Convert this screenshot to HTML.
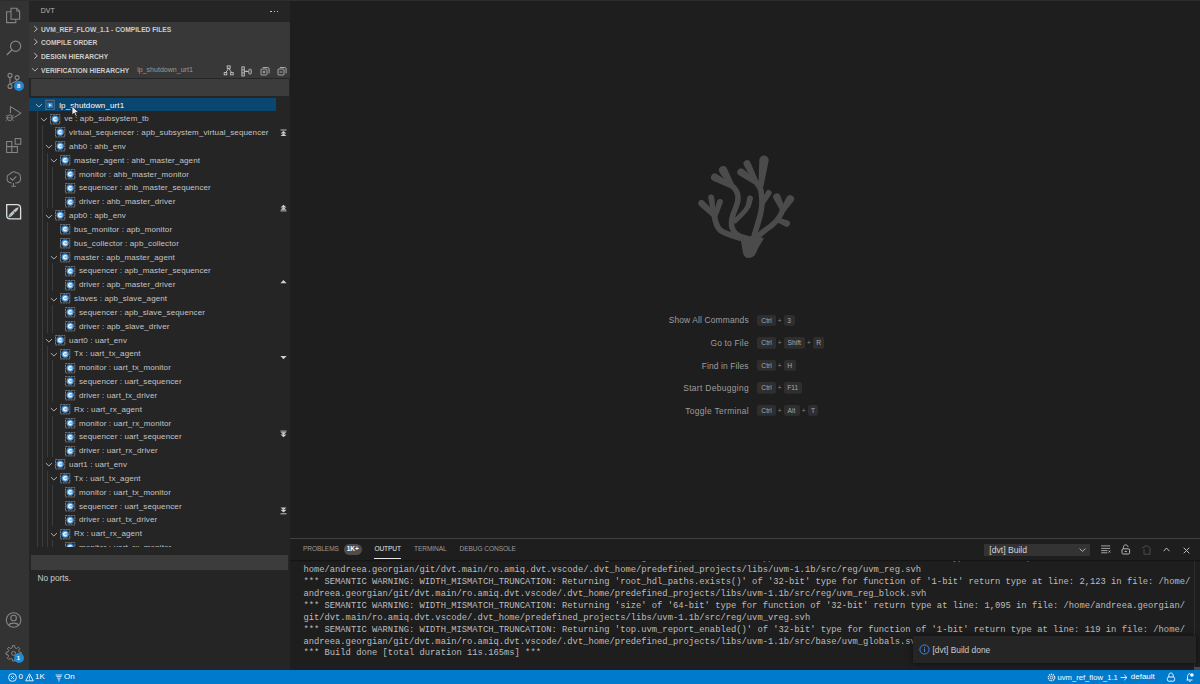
<!DOCTYPE html>
<html><head><meta charset="utf-8">
<style>
*{margin:0;padding:0;box-sizing:border-box}
html,body{width:1200px;height:684px;overflow:hidden;background:#1e1e1e;font-family:"Liberation Sans",sans-serif;}
.abs{position:absolute}
#topline{position:absolute;left:0;top:0;width:1200px;height:1px;background:#2d2d2d}
#act{position:absolute;left:0;top:1px;width:28.8px;height:669px;background:#333333}
#side{position:absolute;left:28.8px;top:1px;width:261.2px;height:669px;background:#252526;overflow:hidden}
#editor{position:absolute;left:290px;top:1px;width:910px;height:537px;background:#1e1e1e}
#panel{position:absolute;left:290px;top:538px;width:910px;height:132px;background:#1e1e1e;border-top:1px solid #414141}
#status{position:absolute;left:0;top:670px;width:1200px;height:14px;background:#007acc}
.stitle{position:absolute;left:12px;top:5.7px;font-size:6.9px;color:#bbbbbb;letter-spacing:0.1px}
.sdots{position:absolute;left:241.5px;top:10px;width:8.5px;height:1.4px}
.sdots i{position:absolute;top:0;width:1.6px;height:1.4px;background:#c5c5c5}
#sections{position:absolute;left:0;top:21px;width:261.2px;height:55.5px;background:#383838}
.sec{position:absolute;left:0;height:13.75px;width:100%}
.sec .t{position:absolute;left:12.1px;top:2.6px;font-size:7.3px;font-weight:bold;color:#cccccc;white-space:nowrap;transform:scaleX(0.915);transform-origin:0 0}
.sec .cv{position:absolute;left:4.1px;top:2.9px}
.sec .cv.down{left:2.2px;top:4.2px}
.sec .sub{position:absolute;left:108.4px;top:2.9px;font-size:7.05px;color:#9a9a9a;white-space:nowrap}
#filter{position:absolute;left:2.2px;top:78px;width:257.8px;height:16.5px;background:#3c3c3c}
#tree{position:absolute;left:0;top:96.5px;width:247.5px;height:449.6px;overflow:hidden}
.row{position:absolute;left:0;width:100%;height:13.8px}
.row.sel{background:#094771}
.row .cv{position:absolute;top:5.4px;width:8px;height:6px;margin-left:-0.2px}
.row .icw{position:absolute;top:0.8px;width:12px;height:12px;margin-left:-0.3px}
.row .lbl{position:absolute;top:3.0px;font-size:8.0px;letter-spacing:0.12px;line-height:normal;color:#c4c4c4;white-space:nowrap}
.row.sel .lbl{color:#ffffff}
svg{display:block}
.guide{position:absolute;width:1px;background:#3c3c3c}
#ports{position:absolute;left:2.2px;top:554px;width:257.5px;height:15px;background:#3c3c3c}
.noports{position:absolute;left:8.6px;top:572.3px;font-size:8.3px;color:#cccccc}
.sbtn{position:absolute;left:250.5px;width:7px;height:8px}
/* editor watermark */
.wl{position:absolute;right:451.4px;font-size:8.45px;color:#9d9d9d;white-space:nowrap;height:12px;line-height:12px}
.wk{position:absolute;left:467px;white-space:nowrap;height:12px;line-height:12px;font-size:0}
.kc{position:absolute;height:11.5px;line-height:11.5px;text-align:center;background:#2e2e2e;border-radius:2px;font-size:6.7px;color:#a8a8a8;box-shadow:inset 0 -0.6px 0 #262626}
.plus{position:absolute;height:11.5px;text-align:center;font-size:6.5px;color:#8a8a8a;line-height:11.5px}
/* panel */
.ptab{position:absolute;top:5.7px;font-size:6.6px;color:#9b9b9b;white-space:nowrap;letter-spacing:-0.1px}
.ptab.act{color:#e7e7e7}
.badge{position:absolute;left:54px;top:5.2px;width:17.6px;height:10.6px;border-radius:5.3px;background:#4d4d4d;color:#fff;font-size:6.5px;font-weight:bold;text-align:center;line-height:10.6px}
#out{position:absolute;left:13.4px;top:22px;width:890px;height:108px;overflow:hidden}
#out .inner{position:absolute;left:0;top:4.3px;width:890px;height:110px}
.shadow{position:absolute;left:0;top:21px;width:910px;height:2px;background:linear-gradient(#121212,rgba(18,18,18,0))}
.ol{position:absolute;left:0;font-family:"Liberation Mono",monospace;font-size:8.8px;color:#bdbdbd;white-space:pre;height:11.875px;line-height:11.875px}
.dd{position:absolute;left:694px;top:4.9px;width:106px;height:12.2px;background:#333333;color:#d4d4d4;font-size:8.6px;line-height:12.2px;padding-left:5.3px}
.notif{position:absolute;left:913px;top:636.3px;width:282.5px;height:26.7px;background:#252526;box-shadow:0 0 6px rgba(0,0,0,0.6)}
.ntext{position:absolute;left:19.5px;top:8.8px;font-size:8.4px;color:#cccccc;white-space:nowrap}
.stxt{position:absolute;top:2.3px;font-size:8px;color:#ffffff;white-space:nowrap}
</style></head>
<body>
<div id="topline"></div>

<!-- ACTIVITY BAR -->
<div id="act">
 <!-- files -->
 <svg class="abs" style="left:5.3px;top:4.9px" width="16" height="18" viewBox="0 0 16 18">
  <path d="M6 2.2 H11.6 L14.6 5.2 V13.2 H6 Z" fill="none" stroke="#858585" stroke-width="1.1"/>
  <path d="M11.6 2.2 V5.2 H14.6" fill="none" stroke="#858585" stroke-width="0.9"/>
  <path d="M6 5.8 H1.6 V16.6 H10.8 V13.2" fill="none" stroke="#858585" stroke-width="1.1"/>
 </svg>
 <!-- search -->
 <svg class="abs" style="left:5px;top:38.3px" width="18" height="18" viewBox="0 0 18 18">
  <circle cx="10.6" cy="7.2" r="5.1" fill="none" stroke="#858585" stroke-width="1.2"/>
  <path d="M7 10.8 L1.8 16" stroke="#858585" stroke-width="1.3"/>
 </svg>
 <!-- source control -->
 <svg class="abs" style="left:5px;top:69px" width="20" height="22" viewBox="0 0 20 22">
  <circle cx="5" cy="5.4" r="2" fill="none" stroke="#858585" stroke-width="1.1"/>
  <circle cx="5" cy="16.4" r="2" fill="none" stroke="#858585" stroke-width="1.1"/>
  <circle cx="12.1" cy="7.6" r="2" fill="none" stroke="#858585" stroke-width="1.1"/>
  <path d="M5 7.4 V14.4 M12.1 9.6 C12.1 12.5 7 12 5.6 14.6" fill="none" stroke="#858585" stroke-width="1.1"/>
 </svg>
 <div class="abs" style="left:13.6px;top:79.8px;width:10px;height:10px;border-radius:5px;background:#1f8ad2;color:#fff;font-size:6px;font-weight:bold;text-align:center;line-height:10px">8</div>
 <!-- run debug -->
 <svg class="abs" style="left:4px;top:104px" width="20" height="18" viewBox="0 0 20 18">
  <path d="M6.4 8.2 V1.6 L16.9 8.1 L10.4 12.4" fill="none" stroke="#858585" stroke-width="1.05" stroke-linejoin="round"/>
  <ellipse cx="5.8" cy="12.8" rx="2.5" ry="2.9" fill="none" stroke="#858585" stroke-width="1"/>
  <path d="M2 10.2 L3.5 11 M1.8 15.6 L3.4 14.6 M9.6 10.2 L8.1 11 M9.8 15.6 L8.2 14.6 M3.4 12.8 H8.2 M1.6 12.8 H3.2 M8.4 12.8 H10" stroke="#858585" stroke-width="0.85"/>
 </svg>
 <!-- extensions -->
 <svg class="abs" style="left:4.8px;top:136.2px" width="18" height="18" viewBox="0 0 18 18">
  <path d="M1.6 4.4 H6.8 V9.6 H12.4 V15.4 H1.6 Z M1.6 9.6 H6.8 V15.4" fill="none" stroke="#858585" stroke-width="1.05"/>
  <rect x="10.2" y="1.6" width="5.6" height="5.6" fill="none" stroke="#858585" stroke-width="1.05"/>
 </svg>
 <!-- tree check -->
 <svg class="abs" style="left:5px;top:169px" width="18" height="18" viewBox="0 0 18 18">
  <path d="M6.6 13 C3.6 13 1.8 11 2.2 8.6 C1.6 6 3.4 4.2 5.2 4 C6 2 9.6 1 11.2 2.8 C13.6 2.6 15.8 4.8 15.4 7.4 C16.4 9.8 14.6 13 11.4 13 H10.2" fill="none" stroke="#858585" stroke-width="1.05"/>
  <path d="M5.2 8 L7.6 10.2 L11.3 6.4" fill="none" stroke="#858585" stroke-width="1.05"/>
  <path d="M8.4 13 V16.2 M6.4 16.2 H10.9" fill="none" stroke="#858585" stroke-width="1.05"/>
 </svg>
 <!-- DVT (active) -->
 <svg class="abs" style="left:5px;top:202px" width="18" height="18" viewBox="0 0 18 18">
  <path d="M1.7 1.6 H11.8 C14 1.6 15.6 3.2 15.6 5.4 V15.8 H5.2 C3 15.8 1.7 14.4 1.7 12.4 Z" fill="none" stroke="#dedede" stroke-width="1.3"/>
  <path d="M4.2 11.6 L10.4 5.6 C11.4 4.7 12.6 4.3 13.6 4.2 C13.5 5.2 13.1 6.4 12.2 7.4 L6.2 13.6 Z" fill="#c4c4c4"/>
  <path d="M4.2 11.6 L3.4 13.8 L4.0 14.4 L6.2 13.6 Z" fill="#8fc0e0"/>
  <circle cx="9.6" cy="9.2" r="0.8" fill="#555"/>
 </svg>
 <!-- account -->
 <svg class="abs" style="left:5px;top:610px" width="18" height="18" viewBox="0 0 18 18">
  <circle cx="8.6" cy="9" r="7.3" fill="none" stroke="#858585" stroke-width="1.1"/>
  <circle cx="8.6" cy="7" r="2.8" fill="none" stroke="#858585" stroke-width="1.1"/>
  <path d="M3.8 14.2 C5 11.4 12.2 11.4 13.4 14.2" fill="none" stroke="#858585" stroke-width="1.1"/>
 </svg>
 <!-- gear -->
 <svg class="abs" style="left:5px;top:643px" width="18" height="18" viewBox="0 0 18 18">
  <path d="M7.6 1.6 H9.6 L10 3.8 L11.6 4.6 L13.4 3.2 L14.8 4.6 L13.6 6.4 L14.2 8 L16.2 8.4 V10.4 L14.2 10.8 L13.6 12.4 L14.8 14.2 L13.4 15.6 L11.6 14.4 L10 15 L9.6 17 H7.6 L7.2 15 L5.6 14.4 L3.8 15.6 L2.4 14.2 L3.6 12.4 L3 10.8 L1 10.4 V8.4 L3 8 L3.6 6.4 L2.4 4.6 L3.8 3.2 L5.6 4.6 L7.2 3.8 Z" fill="none" stroke="#858585" stroke-width="1"/>
  <circle cx="8.6" cy="9.4" r="2" fill="none" stroke="#858585" stroke-width="1"/>
 </svg>
 <div class="abs" style="left:13.5px;top:651.7px;width:10px;height:10px;border-radius:5px;background:#1f8ad2;color:#fff;font-size:6px;font-weight:bold;text-align:center;line-height:10px">1</div>
</div>

<!-- SIDEBAR -->
<div id="side">
 <div class="stitle">DVT</div>
 <div class="sdots"><i style="left:0"></i><i style="left:3.3px"></i><i style="left:6.6px"></i></div>
 <div id="sections">
  <div class="sec" style="top:0.5px"><span class="cv"><svg class="chev" width="6" height="8" viewBox="0 0 6 8"><path d="M1.3 1.1 L4.3 3.9 L1.3 6.7" fill="none" stroke="#c5c5c5" stroke-width="0.95"/></svg></span><span class="t">UVM_REF_FLOW_1.1 - COMPILED FILES</span></div>
  <div class="sec" style="top:13.6px"><span class="cv"><svg class="chev" width="6" height="8" viewBox="0 0 6 8"><path d="M1.3 1.1 L4.3 3.9 L1.3 6.7" fill="none" stroke="#c5c5c5" stroke-width="0.95"/></svg></span><span class="t">COMPILE ORDER</span></div>
  <div class="sec" style="top:27.1px"><span class="cv"><svg class="chev" width="6" height="8" viewBox="0 0 6 8"><path d="M1.3 1.1 L4.3 3.9 L1.3 6.7" fill="none" stroke="#c5c5c5" stroke-width="0.95"/></svg></span><span class="t">DESIGN HIERARCHY</span></div>
  <div class="sec" style="top:41.2px"><span class="cv down"><svg class="chev" width="8" height="6" viewBox="0 0 8 6"><path d="M0.9 1.1 L3.9 4.0 L6.9 1.1" fill="none" stroke="#c5c5c5" stroke-width="0.85"/></svg></span><span class="t">VERIFICATION HIERARCHY</span><span class="sub">lp_shutdown_urt1</span>
   <svg class="abs" style="left:194px;top:2.1px" width="12" height="11" viewBox="0 0 12 11">
    <rect x="4.2" y="0.9" width="3" height="2.4" fill="none" stroke="#c5c5c5" stroke-width="0.9"/>
    <path d="M5.7 3.3 L2.6 7.8 M5.7 3.3 L8.8 7.8" stroke="#c5c5c5" stroke-width="0.9"/>
    <rect x="1.2" y="7.6" width="2.6" height="2.2" fill="none" stroke="#c5c5c5" stroke-width="0.9"/>
    <rect x="7.6" y="7.6" width="2.6" height="2.2" fill="none" stroke="#c5c5c5" stroke-width="0.9"/>
   </svg>
   <svg class="abs" style="left:212px;top:2.5px" width="12" height="11" viewBox="0 0 12 11">
    <rect x="0.9" y="0.9" width="2.4" height="9" fill="none" stroke="#c5c5c5" stroke-width="0.9"/>
    <path d="M0.9 3.9 H3.3 M0.9 6.9 H3.3 M3.3 5.4 H7.2" stroke="#c5c5c5" stroke-width="0.9"/>
    <circle cx="5.6" cy="5.4" r="0.8" fill="#c5c5c5"/>
    <rect x="7.8" y="3.3" width="2.4" height="4.6" rx="0.6" fill="none" stroke="#c5c5c5" stroke-width="0.9"/>
   </svg>
   <svg class="abs" style="left:230.8px;top:2.6px" width="11" height="11" viewBox="0 0 11 11">
    <rect x="1" y="3" width="6" height="6" rx="0.7" fill="none" stroke="#c5c5c5" stroke-width="0.8"/>
    <path d="M2.8 1.5 H7.8 C8.6 1.5 9.1 2 9.1 2.8 V7.4" fill="none" stroke="#c5c5c5" stroke-width="0.8"/>
    <path d="M4 4.6 V7.4 M2.6 6 H5.4" stroke="#c5c5c5" stroke-width="0.8"/>
   </svg>
   <svg class="abs" style="left:248.6px;top:2.6px" width="11" height="11" viewBox="0 0 11 11">
    <rect x="1" y="3" width="6" height="6" rx="0.7" fill="none" stroke="#c5c5c5" stroke-width="0.8"/>
    <path d="M2.8 1.5 H7.8 C8.6 1.5 9.1 2 9.1 2.8 V7.4" fill="none" stroke="#c5c5c5" stroke-width="0.8"/>
    <path d="M2.6 6 H5.4" stroke="#c5c5c5" stroke-width="0.8"/>
   </svg>
  </div>
 </div>
 <div id="filter"></div>
 <div id="tree">
<div class="guide" style="left:8.60px;top:13.83px;height:442.56px"></div>
<div class="guide" style="left:13.55px;top:27.66px;height:428.73px"></div>
<div class="guide" style="left:18.50px;top:55.32px;height:55.32px"></div>
<div class="guide" style="left:23.45px;top:69.15px;height:41.49px"></div>
<div class="guide" style="left:18.50px;top:124.47px;height:110.64px"></div>
<div class="guide" style="left:23.45px;top:165.96px;height:27.66px"></div>
<div class="guide" style="left:23.45px;top:207.45px;height:27.66px"></div>
<div class="guide" style="left:18.50px;top:248.94px;height:110.64px"></div>
<div class="guide" style="left:23.45px;top:262.77px;height:41.49px"></div>
<div class="guide" style="left:23.45px;top:318.09px;height:41.49px"></div>
<div class="guide" style="left:18.50px;top:373.41px;height:82.98px"></div>
<div class="guide" style="left:23.45px;top:387.24px;height:41.49px"></div>
<div class="guide" style="left:23.45px;top:442.56px;height:13.83px"></div>
<div class="row sel" style="top:0.00px"><span class="cv" style="left:6.40px"><svg class="chev" width="8" height="6" viewBox="0 0 8 6"><path d="M0.9 1.1 L3.9 4.0 L6.9 1.1" fill="none" stroke="#c5c5c5" stroke-width="0.85"/></svg></span><span class="icw" style="left:15.70px;top:0.8px"><svg class="ic" width="12" height="12" viewBox="0 0 12 12"><rect x="1.9" y="2.3" width="8.3" height="9.6" fill="none" stroke="#6d7480" stroke-width="0.9"/><rect x="3.4" y="4.6" width="5.4" height="5.2" fill="#3f86c6"/><path d="M5 5.6 L7.6 7.2 L5 8.8 Z" fill="#e8f2fa"/></svg></span><span class="lbl" style="left:30.40px">lp_shutdown_urt1</span></div>
<div class="row" style="top:13.83px"><span class="cv" style="left:11.35px"><svg class="chev" width="8" height="6" viewBox="0 0 8 6"><path d="M0.9 1.1 L3.9 4.0 L6.9 1.1" fill="none" stroke="#c5c5c5" stroke-width="0.85"/></svg></span><span class="icw" style="left:20.85px;top:1.3px"><svg class="ic" width="12" height="12" viewBox="0 0 12 12"><rect x="1.5" y="1.6" width="9.3" height="9.3" fill="none" stroke="#8e8e8e" stroke-width="0.8" stroke-dasharray="2.1 0.6 1.9 0.6"/><circle cx="6.15" cy="6.05" r="3.6" fill="#4d9ce0"/><path d="M2.9 4.4 A3.6 3.6 0 0 1 9.4 4.4" fill="none" stroke="#1d5aa0" stroke-width="0.9"/><circle cx="6.15" cy="6.2" r="2.3" fill="#86c0f2"/><path d="M7.5 5.0 A1.65 1.65 0 1 0 7.5 7.3" fill="none" stroke="#ffffff" stroke-width="1.15"/></svg></span><span class="lbl" style="left:35.35px">ve : apb_subsystem_tb</span></div>
<div class="row" style="top:27.66px"><span class="cv" style="left:16.30px"></span><span class="icw" style="left:25.80px;top:1.3px"><svg class="ic" width="12" height="12" viewBox="0 0 12 12"><rect x="1.5" y="1.6" width="9.3" height="9.3" fill="none" stroke="#8e8e8e" stroke-width="0.8" stroke-dasharray="2.1 0.6 1.9 0.6"/><circle cx="6.15" cy="6.05" r="3.6" fill="#4d9ce0"/><path d="M2.9 4.4 A3.6 3.6 0 0 1 9.4 4.4" fill="none" stroke="#1d5aa0" stroke-width="0.9"/><circle cx="6.15" cy="6.2" r="2.3" fill="#86c0f2"/><path d="M7.5 5.0 A1.65 1.65 0 1 0 7.5 7.3" fill="none" stroke="#ffffff" stroke-width="1.15"/></svg></span><span class="lbl" style="left:40.30px">virtual_sequencer : apb_subsystem_virtual_sequencer</span></div>
<div class="row" style="top:41.49px"><span class="cv" style="left:16.30px"><svg class="chev" width="8" height="6" viewBox="0 0 8 6"><path d="M0.9 1.1 L3.9 4.0 L6.9 1.1" fill="none" stroke="#c5c5c5" stroke-width="0.85"/></svg></span><span class="icw" style="left:25.80px;top:1.3px"><svg class="ic" width="12" height="12" viewBox="0 0 12 12"><rect x="1.5" y="1.6" width="9.3" height="9.3" fill="none" stroke="#8e8e8e" stroke-width="0.8" stroke-dasharray="2.1 0.6 1.9 0.6"/><circle cx="6.15" cy="6.05" r="3.6" fill="#4d9ce0"/><path d="M2.9 4.4 A3.6 3.6 0 0 1 9.4 4.4" fill="none" stroke="#1d5aa0" stroke-width="0.9"/><circle cx="6.15" cy="6.2" r="2.3" fill="#86c0f2"/><path d="M7.5 5.0 A1.65 1.65 0 1 0 7.5 7.3" fill="none" stroke="#ffffff" stroke-width="1.15"/></svg></span><span class="lbl" style="left:40.30px">ahb0 : ahb_env</span></div>
<div class="row" style="top:55.32px"><span class="cv" style="left:21.25px"><svg class="chev" width="8" height="6" viewBox="0 0 8 6"><path d="M0.9 1.1 L3.9 4.0 L6.9 1.1" fill="none" stroke="#c5c5c5" stroke-width="0.85"/></svg></span><span class="icw" style="left:30.75px;top:1.3px"><svg class="ic" width="12" height="12" viewBox="0 0 12 12"><rect x="1.5" y="1.6" width="9.3" height="9.3" fill="none" stroke="#8e8e8e" stroke-width="0.8" stroke-dasharray="2.1 0.6 1.9 0.6"/><circle cx="6.15" cy="6.05" r="3.6" fill="#4d9ce0"/><path d="M2.9 4.4 A3.6 3.6 0 0 1 9.4 4.4" fill="none" stroke="#1d5aa0" stroke-width="0.9"/><circle cx="6.15" cy="6.2" r="2.3" fill="#86c0f2"/><path d="M7.5 5.0 A1.65 1.65 0 1 0 7.5 7.3" fill="none" stroke="#ffffff" stroke-width="1.15"/></svg></span><span class="lbl" style="left:45.25px">master_agent : ahb_master_agent</span></div>
<div class="row" style="top:69.15px"><span class="cv" style="left:26.20px"></span><span class="icw" style="left:35.70px;top:1.3px"><svg class="ic" width="12" height="12" viewBox="0 0 12 12"><rect x="1.5" y="1.6" width="9.3" height="9.3" fill="none" stroke="#8e8e8e" stroke-width="0.8" stroke-dasharray="2.1 0.6 1.9 0.6"/><circle cx="6.15" cy="6.05" r="3.6" fill="#4d9ce0"/><path d="M2.9 4.4 A3.6 3.6 0 0 1 9.4 4.4" fill="none" stroke="#1d5aa0" stroke-width="0.9"/><circle cx="6.15" cy="6.2" r="2.3" fill="#86c0f2"/><path d="M7.5 5.0 A1.65 1.65 0 1 0 7.5 7.3" fill="none" stroke="#ffffff" stroke-width="1.15"/></svg></span><span class="lbl" style="left:50.20px">monitor : ahb_master_monitor</span></div>
<div class="row" style="top:82.98px"><span class="cv" style="left:26.20px"></span><span class="icw" style="left:35.70px;top:1.3px"><svg class="ic" width="12" height="12" viewBox="0 0 12 12"><rect x="1.5" y="1.6" width="9.3" height="9.3" fill="none" stroke="#8e8e8e" stroke-width="0.8" stroke-dasharray="2.1 0.6 1.9 0.6"/><circle cx="6.15" cy="6.05" r="3.6" fill="#4d9ce0"/><path d="M2.9 4.4 A3.6 3.6 0 0 1 9.4 4.4" fill="none" stroke="#1d5aa0" stroke-width="0.9"/><circle cx="6.15" cy="6.2" r="2.3" fill="#86c0f2"/><path d="M7.5 5.0 A1.65 1.65 0 1 0 7.5 7.3" fill="none" stroke="#ffffff" stroke-width="1.15"/></svg></span><span class="lbl" style="left:50.20px">sequencer : ahb_master_sequencer</span></div>
<div class="row" style="top:96.81px"><span class="cv" style="left:26.20px"></span><span class="icw" style="left:35.70px;top:1.3px"><svg class="ic" width="12" height="12" viewBox="0 0 12 12"><rect x="1.5" y="1.6" width="9.3" height="9.3" fill="none" stroke="#8e8e8e" stroke-width="0.8" stroke-dasharray="2.1 0.6 1.9 0.6"/><circle cx="6.15" cy="6.05" r="3.6" fill="#4d9ce0"/><path d="M2.9 4.4 A3.6 3.6 0 0 1 9.4 4.4" fill="none" stroke="#1d5aa0" stroke-width="0.9"/><circle cx="6.15" cy="6.2" r="2.3" fill="#86c0f2"/><path d="M7.5 5.0 A1.65 1.65 0 1 0 7.5 7.3" fill="none" stroke="#ffffff" stroke-width="1.15"/></svg></span><span class="lbl" style="left:50.20px">driver : ahb_master_driver</span></div>
<div class="row" style="top:110.64px"><span class="cv" style="left:16.30px"><svg class="chev" width="8" height="6" viewBox="0 0 8 6"><path d="M0.9 1.1 L3.9 4.0 L6.9 1.1" fill="none" stroke="#c5c5c5" stroke-width="0.85"/></svg></span><span class="icw" style="left:25.80px;top:1.3px"><svg class="ic" width="12" height="12" viewBox="0 0 12 12"><rect x="1.5" y="1.6" width="9.3" height="9.3" fill="none" stroke="#8e8e8e" stroke-width="0.8" stroke-dasharray="2.1 0.6 1.9 0.6"/><circle cx="6.15" cy="6.05" r="3.6" fill="#4d9ce0"/><path d="M2.9 4.4 A3.6 3.6 0 0 1 9.4 4.4" fill="none" stroke="#1d5aa0" stroke-width="0.9"/><circle cx="6.15" cy="6.2" r="2.3" fill="#86c0f2"/><path d="M7.5 5.0 A1.65 1.65 0 1 0 7.5 7.3" fill="none" stroke="#ffffff" stroke-width="1.15"/></svg></span><span class="lbl" style="left:40.30px">apb0 : apb_env</span></div>
<div class="row" style="top:124.47px"><span class="cv" style="left:21.25px"></span><span class="icw" style="left:30.75px;top:1.3px"><svg class="ic" width="12" height="12" viewBox="0 0 12 12"><rect x="1.5" y="1.6" width="9.3" height="9.3" fill="none" stroke="#8e8e8e" stroke-width="0.8" stroke-dasharray="2.1 0.6 1.9 0.6"/><circle cx="6.15" cy="6.05" r="3.6" fill="#4d9ce0"/><path d="M2.9 4.4 A3.6 3.6 0 0 1 9.4 4.4" fill="none" stroke="#1d5aa0" stroke-width="0.9"/><circle cx="6.15" cy="6.2" r="2.3" fill="#86c0f2"/><path d="M7.5 5.0 A1.65 1.65 0 1 0 7.5 7.3" fill="none" stroke="#ffffff" stroke-width="1.15"/></svg></span><span class="lbl" style="left:45.25px">bus_monitor : apb_monitor</span></div>
<div class="row" style="top:138.30px"><span class="cv" style="left:21.25px"></span><span class="icw" style="left:30.75px;top:1.3px"><svg class="ic" width="12" height="12" viewBox="0 0 12 12"><rect x="1.5" y="1.6" width="9.3" height="9.3" fill="none" stroke="#8e8e8e" stroke-width="0.8" stroke-dasharray="2.1 0.6 1.9 0.6"/><circle cx="6.15" cy="6.05" r="3.6" fill="#4d9ce0"/><path d="M2.9 4.4 A3.6 3.6 0 0 1 9.4 4.4" fill="none" stroke="#1d5aa0" stroke-width="0.9"/><circle cx="6.15" cy="6.2" r="2.3" fill="#86c0f2"/><path d="M7.5 5.0 A1.65 1.65 0 1 0 7.5 7.3" fill="none" stroke="#ffffff" stroke-width="1.15"/></svg></span><span class="lbl" style="left:45.25px">bus_collector : apb_collector</span></div>
<div class="row" style="top:152.13px"><span class="cv" style="left:21.25px"><svg class="chev" width="8" height="6" viewBox="0 0 8 6"><path d="M0.9 1.1 L3.9 4.0 L6.9 1.1" fill="none" stroke="#c5c5c5" stroke-width="0.85"/></svg></span><span class="icw" style="left:30.75px;top:1.3px"><svg class="ic" width="12" height="12" viewBox="0 0 12 12"><rect x="1.5" y="1.6" width="9.3" height="9.3" fill="none" stroke="#8e8e8e" stroke-width="0.8" stroke-dasharray="2.1 0.6 1.9 0.6"/><circle cx="6.15" cy="6.05" r="3.6" fill="#4d9ce0"/><path d="M2.9 4.4 A3.6 3.6 0 0 1 9.4 4.4" fill="none" stroke="#1d5aa0" stroke-width="0.9"/><circle cx="6.15" cy="6.2" r="2.3" fill="#86c0f2"/><path d="M7.5 5.0 A1.65 1.65 0 1 0 7.5 7.3" fill="none" stroke="#ffffff" stroke-width="1.15"/></svg></span><span class="lbl" style="left:45.25px">master : apb_master_agent</span></div>
<div class="row" style="top:165.96px"><span class="cv" style="left:26.20px"></span><span class="icw" style="left:35.70px;top:1.3px"><svg class="ic" width="12" height="12" viewBox="0 0 12 12"><rect x="1.5" y="1.6" width="9.3" height="9.3" fill="none" stroke="#8e8e8e" stroke-width="0.8" stroke-dasharray="2.1 0.6 1.9 0.6"/><circle cx="6.15" cy="6.05" r="3.6" fill="#4d9ce0"/><path d="M2.9 4.4 A3.6 3.6 0 0 1 9.4 4.4" fill="none" stroke="#1d5aa0" stroke-width="0.9"/><circle cx="6.15" cy="6.2" r="2.3" fill="#86c0f2"/><path d="M7.5 5.0 A1.65 1.65 0 1 0 7.5 7.3" fill="none" stroke="#ffffff" stroke-width="1.15"/></svg></span><span class="lbl" style="left:50.20px">sequencer : apb_master_sequencer</span></div>
<div class="row" style="top:179.79px"><span class="cv" style="left:26.20px"></span><span class="icw" style="left:35.70px;top:1.3px"><svg class="ic" width="12" height="12" viewBox="0 0 12 12"><rect x="1.5" y="1.6" width="9.3" height="9.3" fill="none" stroke="#8e8e8e" stroke-width="0.8" stroke-dasharray="2.1 0.6 1.9 0.6"/><circle cx="6.15" cy="6.05" r="3.6" fill="#4d9ce0"/><path d="M2.9 4.4 A3.6 3.6 0 0 1 9.4 4.4" fill="none" stroke="#1d5aa0" stroke-width="0.9"/><circle cx="6.15" cy="6.2" r="2.3" fill="#86c0f2"/><path d="M7.5 5.0 A1.65 1.65 0 1 0 7.5 7.3" fill="none" stroke="#ffffff" stroke-width="1.15"/></svg></span><span class="lbl" style="left:50.20px">driver : apb_master_driver</span></div>
<div class="row" style="top:193.62px"><span class="cv" style="left:21.25px"><svg class="chev" width="8" height="6" viewBox="0 0 8 6"><path d="M0.9 1.1 L3.9 4.0 L6.9 1.1" fill="none" stroke="#c5c5c5" stroke-width="0.85"/></svg></span><span class="icw" style="left:30.75px;top:1.3px"><svg class="ic" width="12" height="12" viewBox="0 0 12 12"><rect x="1.5" y="1.6" width="9.3" height="9.3" fill="none" stroke="#8e8e8e" stroke-width="0.8" stroke-dasharray="2.1 0.6 1.9 0.6"/><circle cx="6.15" cy="6.05" r="3.6" fill="#4d9ce0"/><path d="M2.9 4.4 A3.6 3.6 0 0 1 9.4 4.4" fill="none" stroke="#1d5aa0" stroke-width="0.9"/><circle cx="6.15" cy="6.2" r="2.3" fill="#86c0f2"/><path d="M7.5 5.0 A1.65 1.65 0 1 0 7.5 7.3" fill="none" stroke="#ffffff" stroke-width="1.15"/></svg></span><span class="lbl" style="left:45.25px">slaves : apb_slave_agent</span></div>
<div class="row" style="top:207.45px"><span class="cv" style="left:26.20px"></span><span class="icw" style="left:35.70px;top:1.3px"><svg class="ic" width="12" height="12" viewBox="0 0 12 12"><rect x="1.5" y="1.6" width="9.3" height="9.3" fill="none" stroke="#8e8e8e" stroke-width="0.8" stroke-dasharray="2.1 0.6 1.9 0.6"/><circle cx="6.15" cy="6.05" r="3.6" fill="#4d9ce0"/><path d="M2.9 4.4 A3.6 3.6 0 0 1 9.4 4.4" fill="none" stroke="#1d5aa0" stroke-width="0.9"/><circle cx="6.15" cy="6.2" r="2.3" fill="#86c0f2"/><path d="M7.5 5.0 A1.65 1.65 0 1 0 7.5 7.3" fill="none" stroke="#ffffff" stroke-width="1.15"/></svg></span><span class="lbl" style="left:50.20px">sequencer : apb_slave_sequencer</span></div>
<div class="row" style="top:221.28px"><span class="cv" style="left:26.20px"></span><span class="icw" style="left:35.70px;top:1.3px"><svg class="ic" width="12" height="12" viewBox="0 0 12 12"><rect x="1.5" y="1.6" width="9.3" height="9.3" fill="none" stroke="#8e8e8e" stroke-width="0.8" stroke-dasharray="2.1 0.6 1.9 0.6"/><circle cx="6.15" cy="6.05" r="3.6" fill="#4d9ce0"/><path d="M2.9 4.4 A3.6 3.6 0 0 1 9.4 4.4" fill="none" stroke="#1d5aa0" stroke-width="0.9"/><circle cx="6.15" cy="6.2" r="2.3" fill="#86c0f2"/><path d="M7.5 5.0 A1.65 1.65 0 1 0 7.5 7.3" fill="none" stroke="#ffffff" stroke-width="1.15"/></svg></span><span class="lbl" style="left:50.20px">driver : apb_slave_driver</span></div>
<div class="row" style="top:235.11px"><span class="cv" style="left:16.30px"><svg class="chev" width="8" height="6" viewBox="0 0 8 6"><path d="M0.9 1.1 L3.9 4.0 L6.9 1.1" fill="none" stroke="#c5c5c5" stroke-width="0.85"/></svg></span><span class="icw" style="left:25.80px;top:1.3px"><svg class="ic" width="12" height="12" viewBox="0 0 12 12"><rect x="1.5" y="1.6" width="9.3" height="9.3" fill="none" stroke="#8e8e8e" stroke-width="0.8" stroke-dasharray="2.1 0.6 1.9 0.6"/><circle cx="6.15" cy="6.05" r="3.6" fill="#4d9ce0"/><path d="M2.9 4.4 A3.6 3.6 0 0 1 9.4 4.4" fill="none" stroke="#1d5aa0" stroke-width="0.9"/><circle cx="6.15" cy="6.2" r="2.3" fill="#86c0f2"/><path d="M7.5 5.0 A1.65 1.65 0 1 0 7.5 7.3" fill="none" stroke="#ffffff" stroke-width="1.15"/></svg></span><span class="lbl" style="left:40.30px">uart0 : uart_env</span></div>
<div class="row" style="top:248.94px"><span class="cv" style="left:21.25px"><svg class="chev" width="8" height="6" viewBox="0 0 8 6"><path d="M0.9 1.1 L3.9 4.0 L6.9 1.1" fill="none" stroke="#c5c5c5" stroke-width="0.85"/></svg></span><span class="icw" style="left:30.75px;top:1.3px"><svg class="ic" width="12" height="12" viewBox="0 0 12 12"><rect x="1.5" y="1.6" width="9.3" height="9.3" fill="none" stroke="#8e8e8e" stroke-width="0.8" stroke-dasharray="2.1 0.6 1.9 0.6"/><circle cx="6.15" cy="6.05" r="3.6" fill="#4d9ce0"/><path d="M2.9 4.4 A3.6 3.6 0 0 1 9.4 4.4" fill="none" stroke="#1d5aa0" stroke-width="0.9"/><circle cx="6.15" cy="6.2" r="2.3" fill="#86c0f2"/><path d="M7.5 5.0 A1.65 1.65 0 1 0 7.5 7.3" fill="none" stroke="#ffffff" stroke-width="1.15"/></svg></span><span class="lbl" style="left:45.25px">Tx : uart_tx_agent</span></div>
<div class="row" style="top:262.77px"><span class="cv" style="left:26.20px"></span><span class="icw" style="left:35.70px;top:1.3px"><svg class="ic" width="12" height="12" viewBox="0 0 12 12"><rect x="1.5" y="1.6" width="9.3" height="9.3" fill="none" stroke="#8e8e8e" stroke-width="0.8" stroke-dasharray="2.1 0.6 1.9 0.6"/><circle cx="6.15" cy="6.05" r="3.6" fill="#4d9ce0"/><path d="M2.9 4.4 A3.6 3.6 0 0 1 9.4 4.4" fill="none" stroke="#1d5aa0" stroke-width="0.9"/><circle cx="6.15" cy="6.2" r="2.3" fill="#86c0f2"/><path d="M7.5 5.0 A1.65 1.65 0 1 0 7.5 7.3" fill="none" stroke="#ffffff" stroke-width="1.15"/></svg></span><span class="lbl" style="left:50.20px">monitor : uart_tx_monitor</span></div>
<div class="row" style="top:276.60px"><span class="cv" style="left:26.20px"></span><span class="icw" style="left:35.70px;top:1.3px"><svg class="ic" width="12" height="12" viewBox="0 0 12 12"><rect x="1.5" y="1.6" width="9.3" height="9.3" fill="none" stroke="#8e8e8e" stroke-width="0.8" stroke-dasharray="2.1 0.6 1.9 0.6"/><circle cx="6.15" cy="6.05" r="3.6" fill="#4d9ce0"/><path d="M2.9 4.4 A3.6 3.6 0 0 1 9.4 4.4" fill="none" stroke="#1d5aa0" stroke-width="0.9"/><circle cx="6.15" cy="6.2" r="2.3" fill="#86c0f2"/><path d="M7.5 5.0 A1.65 1.65 0 1 0 7.5 7.3" fill="none" stroke="#ffffff" stroke-width="1.15"/></svg></span><span class="lbl" style="left:50.20px">sequencer : uart_sequencer</span></div>
<div class="row" style="top:290.43px"><span class="cv" style="left:26.20px"></span><span class="icw" style="left:35.70px;top:1.3px"><svg class="ic" width="12" height="12" viewBox="0 0 12 12"><rect x="1.5" y="1.6" width="9.3" height="9.3" fill="none" stroke="#8e8e8e" stroke-width="0.8" stroke-dasharray="2.1 0.6 1.9 0.6"/><circle cx="6.15" cy="6.05" r="3.6" fill="#4d9ce0"/><path d="M2.9 4.4 A3.6 3.6 0 0 1 9.4 4.4" fill="none" stroke="#1d5aa0" stroke-width="0.9"/><circle cx="6.15" cy="6.2" r="2.3" fill="#86c0f2"/><path d="M7.5 5.0 A1.65 1.65 0 1 0 7.5 7.3" fill="none" stroke="#ffffff" stroke-width="1.15"/></svg></span><span class="lbl" style="left:50.20px">driver : uart_tx_driver</span></div>
<div class="row" style="top:304.26px"><span class="cv" style="left:21.25px"><svg class="chev" width="8" height="6" viewBox="0 0 8 6"><path d="M0.9 1.1 L3.9 4.0 L6.9 1.1" fill="none" stroke="#c5c5c5" stroke-width="0.85"/></svg></span><span class="icw" style="left:30.75px;top:1.3px"><svg class="ic" width="12" height="12" viewBox="0 0 12 12"><rect x="1.5" y="1.6" width="9.3" height="9.3" fill="none" stroke="#8e8e8e" stroke-width="0.8" stroke-dasharray="2.1 0.6 1.9 0.6"/><circle cx="6.15" cy="6.05" r="3.6" fill="#4d9ce0"/><path d="M2.9 4.4 A3.6 3.6 0 0 1 9.4 4.4" fill="none" stroke="#1d5aa0" stroke-width="0.9"/><circle cx="6.15" cy="6.2" r="2.3" fill="#86c0f2"/><path d="M7.5 5.0 A1.65 1.65 0 1 0 7.5 7.3" fill="none" stroke="#ffffff" stroke-width="1.15"/></svg></span><span class="lbl" style="left:45.25px">Rx : uart_rx_agent</span></div>
<div class="row" style="top:318.09px"><span class="cv" style="left:26.20px"></span><span class="icw" style="left:35.70px;top:1.3px"><svg class="ic" width="12" height="12" viewBox="0 0 12 12"><rect x="1.5" y="1.6" width="9.3" height="9.3" fill="none" stroke="#8e8e8e" stroke-width="0.8" stroke-dasharray="2.1 0.6 1.9 0.6"/><circle cx="6.15" cy="6.05" r="3.6" fill="#4d9ce0"/><path d="M2.9 4.4 A3.6 3.6 0 0 1 9.4 4.4" fill="none" stroke="#1d5aa0" stroke-width="0.9"/><circle cx="6.15" cy="6.2" r="2.3" fill="#86c0f2"/><path d="M7.5 5.0 A1.65 1.65 0 1 0 7.5 7.3" fill="none" stroke="#ffffff" stroke-width="1.15"/></svg></span><span class="lbl" style="left:50.20px">monitor : uart_rx_monitor</span></div>
<div class="row" style="top:331.92px"><span class="cv" style="left:26.20px"></span><span class="icw" style="left:35.70px;top:1.3px"><svg class="ic" width="12" height="12" viewBox="0 0 12 12"><rect x="1.5" y="1.6" width="9.3" height="9.3" fill="none" stroke="#8e8e8e" stroke-width="0.8" stroke-dasharray="2.1 0.6 1.9 0.6"/><circle cx="6.15" cy="6.05" r="3.6" fill="#4d9ce0"/><path d="M2.9 4.4 A3.6 3.6 0 0 1 9.4 4.4" fill="none" stroke="#1d5aa0" stroke-width="0.9"/><circle cx="6.15" cy="6.2" r="2.3" fill="#86c0f2"/><path d="M7.5 5.0 A1.65 1.65 0 1 0 7.5 7.3" fill="none" stroke="#ffffff" stroke-width="1.15"/></svg></span><span class="lbl" style="left:50.20px">sequencer : uart_sequencer</span></div>
<div class="row" style="top:345.75px"><span class="cv" style="left:26.20px"></span><span class="icw" style="left:35.70px;top:1.3px"><svg class="ic" width="12" height="12" viewBox="0 0 12 12"><rect x="1.5" y="1.6" width="9.3" height="9.3" fill="none" stroke="#8e8e8e" stroke-width="0.8" stroke-dasharray="2.1 0.6 1.9 0.6"/><circle cx="6.15" cy="6.05" r="3.6" fill="#4d9ce0"/><path d="M2.9 4.4 A3.6 3.6 0 0 1 9.4 4.4" fill="none" stroke="#1d5aa0" stroke-width="0.9"/><circle cx="6.15" cy="6.2" r="2.3" fill="#86c0f2"/><path d="M7.5 5.0 A1.65 1.65 0 1 0 7.5 7.3" fill="none" stroke="#ffffff" stroke-width="1.15"/></svg></span><span class="lbl" style="left:50.20px">driver : uart_rx_driver</span></div>
<div class="row" style="top:359.58px"><span class="cv" style="left:16.30px"><svg class="chev" width="8" height="6" viewBox="0 0 8 6"><path d="M0.9 1.1 L3.9 4.0 L6.9 1.1" fill="none" stroke="#c5c5c5" stroke-width="0.85"/></svg></span><span class="icw" style="left:25.80px;top:1.3px"><svg class="ic" width="12" height="12" viewBox="0 0 12 12"><rect x="1.5" y="1.6" width="9.3" height="9.3" fill="none" stroke="#8e8e8e" stroke-width="0.8" stroke-dasharray="2.1 0.6 1.9 0.6"/><circle cx="6.15" cy="6.05" r="3.6" fill="#4d9ce0"/><path d="M2.9 4.4 A3.6 3.6 0 0 1 9.4 4.4" fill="none" stroke="#1d5aa0" stroke-width="0.9"/><circle cx="6.15" cy="6.2" r="2.3" fill="#86c0f2"/><path d="M7.5 5.0 A1.65 1.65 0 1 0 7.5 7.3" fill="none" stroke="#ffffff" stroke-width="1.15"/></svg></span><span class="lbl" style="left:40.30px">uart1 : uart_env</span></div>
<div class="row" style="top:373.41px"><span class="cv" style="left:21.25px"><svg class="chev" width="8" height="6" viewBox="0 0 8 6"><path d="M0.9 1.1 L3.9 4.0 L6.9 1.1" fill="none" stroke="#c5c5c5" stroke-width="0.85"/></svg></span><span class="icw" style="left:30.75px;top:1.3px"><svg class="ic" width="12" height="12" viewBox="0 0 12 12"><rect x="1.5" y="1.6" width="9.3" height="9.3" fill="none" stroke="#8e8e8e" stroke-width="0.8" stroke-dasharray="2.1 0.6 1.9 0.6"/><circle cx="6.15" cy="6.05" r="3.6" fill="#4d9ce0"/><path d="M2.9 4.4 A3.6 3.6 0 0 1 9.4 4.4" fill="none" stroke="#1d5aa0" stroke-width="0.9"/><circle cx="6.15" cy="6.2" r="2.3" fill="#86c0f2"/><path d="M7.5 5.0 A1.65 1.65 0 1 0 7.5 7.3" fill="none" stroke="#ffffff" stroke-width="1.15"/></svg></span><span class="lbl" style="left:45.25px">Tx : uart_tx_agent</span></div>
<div class="row" style="top:387.24px"><span class="cv" style="left:26.20px"></span><span class="icw" style="left:35.70px;top:1.3px"><svg class="ic" width="12" height="12" viewBox="0 0 12 12"><rect x="1.5" y="1.6" width="9.3" height="9.3" fill="none" stroke="#8e8e8e" stroke-width="0.8" stroke-dasharray="2.1 0.6 1.9 0.6"/><circle cx="6.15" cy="6.05" r="3.6" fill="#4d9ce0"/><path d="M2.9 4.4 A3.6 3.6 0 0 1 9.4 4.4" fill="none" stroke="#1d5aa0" stroke-width="0.9"/><circle cx="6.15" cy="6.2" r="2.3" fill="#86c0f2"/><path d="M7.5 5.0 A1.65 1.65 0 1 0 7.5 7.3" fill="none" stroke="#ffffff" stroke-width="1.15"/></svg></span><span class="lbl" style="left:50.20px">monitor : uart_tx_monitor</span></div>
<div class="row" style="top:401.07px"><span class="cv" style="left:26.20px"></span><span class="icw" style="left:35.70px;top:1.3px"><svg class="ic" width="12" height="12" viewBox="0 0 12 12"><rect x="1.5" y="1.6" width="9.3" height="9.3" fill="none" stroke="#8e8e8e" stroke-width="0.8" stroke-dasharray="2.1 0.6 1.9 0.6"/><circle cx="6.15" cy="6.05" r="3.6" fill="#4d9ce0"/><path d="M2.9 4.4 A3.6 3.6 0 0 1 9.4 4.4" fill="none" stroke="#1d5aa0" stroke-width="0.9"/><circle cx="6.15" cy="6.2" r="2.3" fill="#86c0f2"/><path d="M7.5 5.0 A1.65 1.65 0 1 0 7.5 7.3" fill="none" stroke="#ffffff" stroke-width="1.15"/></svg></span><span class="lbl" style="left:50.20px">sequencer : uart_sequencer</span></div>
<div class="row" style="top:414.90px"><span class="cv" style="left:26.20px"></span><span class="icw" style="left:35.70px;top:1.3px"><svg class="ic" width="12" height="12" viewBox="0 0 12 12"><rect x="1.5" y="1.6" width="9.3" height="9.3" fill="none" stroke="#8e8e8e" stroke-width="0.8" stroke-dasharray="2.1 0.6 1.9 0.6"/><circle cx="6.15" cy="6.05" r="3.6" fill="#4d9ce0"/><path d="M2.9 4.4 A3.6 3.6 0 0 1 9.4 4.4" fill="none" stroke="#1d5aa0" stroke-width="0.9"/><circle cx="6.15" cy="6.2" r="2.3" fill="#86c0f2"/><path d="M7.5 5.0 A1.65 1.65 0 1 0 7.5 7.3" fill="none" stroke="#ffffff" stroke-width="1.15"/></svg></span><span class="lbl" style="left:50.20px">driver : uart_tx_driver</span></div>
<div class="row" style="top:428.73px"><span class="cv" style="left:21.25px"><svg class="chev" width="8" height="6" viewBox="0 0 8 6"><path d="M0.9 1.1 L3.9 4.0 L6.9 1.1" fill="none" stroke="#c5c5c5" stroke-width="0.85"/></svg></span><span class="icw" style="left:30.75px;top:1.3px"><svg class="ic" width="12" height="12" viewBox="0 0 12 12"><rect x="1.5" y="1.6" width="9.3" height="9.3" fill="none" stroke="#8e8e8e" stroke-width="0.8" stroke-dasharray="2.1 0.6 1.9 0.6"/><circle cx="6.15" cy="6.05" r="3.6" fill="#4d9ce0"/><path d="M2.9 4.4 A3.6 3.6 0 0 1 9.4 4.4" fill="none" stroke="#1d5aa0" stroke-width="0.9"/><circle cx="6.15" cy="6.2" r="2.3" fill="#86c0f2"/><path d="M7.5 5.0 A1.65 1.65 0 1 0 7.5 7.3" fill="none" stroke="#ffffff" stroke-width="1.15"/></svg></span><span class="lbl" style="left:45.25px">Rx : uart_rx_agent</span></div>
<div class="row" style="top:442.56px"><span class="cv" style="left:26.20px"></span><span class="icw" style="left:35.70px;top:1.3px"><svg class="ic" width="12" height="12" viewBox="0 0 12 12"><rect x="1.5" y="1.6" width="9.3" height="9.3" fill="none" stroke="#8e8e8e" stroke-width="0.8" stroke-dasharray="2.1 0.6 1.9 0.6"/><circle cx="6.15" cy="6.05" r="3.6" fill="#4d9ce0"/><path d="M2.9 4.4 A3.6 3.6 0 0 1 9.4 4.4" fill="none" stroke="#1d5aa0" stroke-width="0.9"/><circle cx="6.15" cy="6.2" r="2.3" fill="#86c0f2"/><path d="M7.5 5.0 A1.65 1.65 0 1 0 7.5 7.3" fill="none" stroke="#ffffff" stroke-width="1.15"/></svg></span><span class="lbl" style="left:50.20px">monitor : uart_rx_monitor</span></div>
 </div>

 <svg class="abs" style="left:251px;top:127.5px" width="7" height="8" viewBox="0 0 7 8"><path d="M0.5 1 H6.5" stroke="#d0d0d0" stroke-width="0.9"/><path d="M3.5 2 L6.5 4.6 H0.5 Z M3.5 4.4 L6.5 7 H0.5 Z" fill="#d0d0d0"/></svg>
 <svg class="abs" style="left:251px;top:202.5px" width="7" height="8" viewBox="0 0 7 8"><path d="M3.5 0.8 L6.5 3.4 H0.5 Z M3.5 3.2 L6.5 5.8 H0.5 Z" fill="#d0d0d0"/><path d="M0.5 6.9 H6.5" stroke="#d0d0d0" stroke-width="0.9"/></svg>
 <svg class="abs" style="left:251px;top:278px" width="7" height="5" viewBox="0 0 7 5"><path d="M3.5 1 L6.6 4.2 H0.4 Z" fill="#d0d0d0"/></svg>
 <svg class="abs" style="left:251px;top:353.5px" width="7" height="5" viewBox="0 0 7 5"><path d="M3.5 4.2 L6.6 1 H0.4 Z" fill="#d0d0d0"/></svg>
 <svg class="abs" style="left:251px;top:429px" width="7" height="8" viewBox="0 0 7 8"><path d="M3.5 4.8 L6.5 2.2 H0.5 Z M3.5 7.2 L6.5 4.6 H0.5 Z" fill="#d0d0d0"/><path d="M0.5 1.1 H6.5" stroke="#d0d0d0" stroke-width="0.9"/></svg>
 <svg class="abs" style="left:251px;top:505px" width="7" height="9" viewBox="0 0 7 9"><path d="M3.5 4 L6.5 1.4 H0.5 Z M3.5 6.4 L6.5 3.8 H0.5 Z" fill="#d0d0d0"/><path d="M0.5 7.8 H6.5" stroke="#d0d0d0" stroke-width="0.9"/></svg>
 <div id="ports"></div>
 <div class="noports">No ports.</div>
</div>

<!-- EDITOR -->
<div id="editor">
<svg class="abs" style="left:400px;top:149px" width="110" height="110" viewBox="690 150 110 110">
<g fill="none" stroke="#4b4b4b" stroke-linecap="round" stroke-linejoin="round">
<path d="M747 240 C738 237 726 235 720 230 C715 225 715 219 714 213" stroke-width="5.8"/>
<path d="M746 238 C737 237 731 231 731.5 222 C732 213 737.5 207 738 199 C738.5 192 735 188 731 185" stroke-width="5.6"/>
<path d="M735 221 C739 217 744 213 747 208 C748.5 205 749.5 202 750 199" stroke-width="4.8"/>
<path d="M753 240 C755 232 758 224 760.5 214 C762.5 206 762 197 761 191 C760.5 188 759 186 757 183" stroke-width="5.6"/>
<path d="M753 241 C759 235 765 230 771 226 C776 222 781 217 782.8 209" stroke-width="5.6"/>
</g>
<g fill="#4b4b4b">
<path d="M729.82 187.23 L719.37 172.36 A4.3 4.3 0 0 1 726.86 168.13 L734.18 184.77 A2.5 2.5 0 0 1 729.82 187.23 Z"/>
<path d="M729.91 188.03 L713.04 180.65 A3.8 3.8 0 0 1 716.65 173.96 L732.09 183.97 A2.3 2.3 0 0 1 729.91 188.03 Z"/>
<path d="M754.84 185.05 L743.85 165.32 A3.6 3.6 0 0 1 750.32 162.15 L759.16 182.95 A2.4 2.4 0 0 1 754.84 185.05 Z"/>
<path d="M753.67 183.88 L738.89 175.16 A3.7 3.7 0 0 1 743.16 169.11 L756.33 180.12 A2.3 2.3 0 0 1 753.67 183.88 Z"/>
<path d="M758.52 185.71 L759.29 159.63 A4.7 4.7 0 0 1 768.63 160.71 L763.48 186.29 A2.5 2.5 0 0 1 758.52 185.71 Z"/>
<path d="M760.03 202.81 L766.32 191.28 A2.9 2.9 0 0 1 771.28 194.28 L763.97 205.19 A2.3 2.3 0 0 1 760.03 202.81 Z"/>
<path d="M746.24 205.57 L746.99 197.89 A3.0 3.0 0 0 1 752.89 199.01 L750.76 206.43 A2.3 2.3 0 0 1 746.24 205.57 Z"/>
<path d="M780.65 211.12 L773.45 198.53 A3.7 3.7 0 0 1 780.13 195.35 L785.35 208.88 A2.6 2.6 0 0 1 780.65 211.12 Z"/>
<path d="M780.82 208.58 L786.76 196.95 A4.0 4.0 0 0 1 793.45 201.34 L785.18 211.42 A2.6 2.6 0 0 1 780.82 208.58 Z"/>
<path d="M778.87 217.87 L787.99 220.50 A3.3 3.3 0 0 1 785.50 226.61 L777.13 222.13 A2.3 2.3 0 0 1 778.87 217.87 Z"/>
<path d="M712.23 216.90 L699.16 205.66 A3.3 3.3 0 0 1 703.66 200.84 L715.77 213.10 A2.6 2.6 0 0 1 712.23 216.90 Z"/>
<path d="M711.22 213.33 L708.26 197.90 A3.0 3.0 0 0 1 714.20 197.04 L715.78 212.67 A2.3 2.3 0 0 1 711.22 213.33 Z"/>
<path d="M713.81 213.30 L717.03 200.94 A3.0 3.0 0 0 1 722.74 202.77 L718.19 214.70 A2.3 2.3 0 0 1 713.81 213.30 Z"/>
<path d="M740.5 238.5 C746 235 758 235 764 238.5 C761 243 758 248 756.5 252 C755 256 752 258 748.5 258 C745 258 743.5 255.5 742.8 252 C742 248 741.5 243 740.5 238.5 Z"/>
</g></svg>

<div class="wl" style="top:313.40px;letter-spacing:0.128px;margin-right:-0.128px">Show All Commands</div>
<div class="kc" style="left:467.10px;width:18.90px;top:313.65px">Ctrl</div>
<div class="kc" style="left:493.50px;width:11.00px;top:313.65px">3</div>
<div class="plus" style="left:486.00px;width:7.50px;top:313.65px">+</div>
<div class="wl" style="top:335.98px;letter-spacing:0.18px;margin-right:-0.18px">Go to File</div>
<div class="kc" style="left:467.10px;width:18.90px;top:336.23px">Ctrl</div>
<div class="kc" style="left:493.50px;width:21.40px;top:336.23px">Shift</div>
<div class="plus" style="left:486.00px;width:7.50px;top:336.23px">+</div>
<div class="kc" style="left:523.00px;width:11.40px;top:336.23px">R</div>
<div class="plus" style="left:514.90px;width:8.10px;top:336.23px">+</div>
<div class="wl" style="top:358.56px;letter-spacing:0.118px;margin-right:-0.118px">Find in Files</div>
<div class="kc" style="left:467.10px;width:18.90px;top:358.81px">Ctrl</div>
<div class="kc" style="left:493.50px;width:12.10px;top:358.81px">H</div>
<div class="plus" style="left:486.00px;width:7.50px;top:358.81px">+</div>
<div class="wl" style="top:381.14px;letter-spacing:0.316px;margin-right:-0.316px">Start Debugging</div>
<div class="kc" style="left:467.10px;width:18.90px;top:381.39px">Ctrl</div>
<div class="kc" style="left:493.50px;width:18.50px;top:381.39px">F11</div>
<div class="plus" style="left:486.00px;width:7.50px;top:381.39px">+</div>
<div class="wl" style="top:403.72px;letter-spacing:0.319px;margin-right:-0.319px">Toggle Terminal</div>
<div class="kc" style="left:467.10px;width:18.90px;top:403.97px">Ctrl</div>
<div class="kc" style="left:493.50px;width:16.00px;top:403.97px">Alt</div>
<div class="plus" style="left:486.00px;width:7.50px;top:403.97px">+</div>
<div class="kc" style="left:517.60px;width:10.70px;top:403.97px">T</div>
<div class="plus" style="left:509.50px;width:8.10px;top:403.97px">+</div>
</div>

<!-- PANEL -->
<div id="panel">
 <div class="ptab" style="left:13px">PROBLEMS</div>
 <div class="badge">1K+</div>
 <div class="ptab act" style="left:84.4px">OUTPUT</div>
 <div class="abs" style="left:84.4px;top:19px;width:26.6px;height:1px;background:#e7e7e7"></div>
 <div class="ptab" style="left:124px">TERMINAL</div>
 <div class="ptab" style="left:169.6px">DEBUG CONSOLE</div>
 <div class="dd">[dvt] Build<svg class="abs" style="left:95px;top:4px" width="7" height="4" viewBox="0 0 7 4"><path d="M0.6 0.6 L3.5 3.3 L6.4 0.6" fill="none" stroke="#c5c5c5" stroke-width="0.9"/></svg></div>
 <svg class="abs" style="left:810px;top:6px" width="11" height="9" viewBox="0 0 11 9">
  <path d="M1.2 0.9 H10.2 M1.2 3.4 H10.2 M1.2 5.6 H7.4 M1.2 7.8 H7.4" stroke="#c5c5c5" stroke-width="0.8"/>
  <path d="M8.4 5.6 L10.3 7.6 M10.3 5.6 L8.4 7.6" stroke="#c5c5c5" stroke-width="0.75"/>
 </svg>
 <svg class="abs" style="left:831px;top:5px" width="10" height="11" viewBox="0 0 10 11">
  <path d="M2.4 4.8 V3.2 C2.4 1.8 3.4 0.9 4.7 0.9 C6 0.9 7 1.8 7 3.1" fill="none" stroke="#c5c5c5" stroke-width="0.9"/>
  <rect x="1" y="4.8" width="7.6" height="5.2" rx="1.2" fill="none" stroke="#c5c5c5" stroke-width="0.9"/>
  <path d="M3.6 7.4 H6" stroke="#c5c5c5" stroke-width="0.9"/>
 </svg>
 <svg class="abs" style="left:851px;top:5.5px" width="10" height="10" viewBox="0 0 10 10">
  <path d="M1 2.4 H3 L4 1 H6.5 L9 3.2 V9.2 H3 V4" fill="none" stroke="#505050" stroke-width="0.9"/>
 </svg>
 <svg class="abs" style="left:872.5px;top:8px" width="7" height="5" viewBox="0 0 7 5">
  <path d="M0.6 4.2 L3.5 1 L6.4 4.2" fill="none" stroke="#c5c5c5" stroke-width="0.95"/>
 </svg>
 <svg class="abs" style="left:892.5px;top:7.5px" width="7" height="7" viewBox="0 0 7 7">
  <path d="M0.7 0.7 L6.3 6.3 M6.3 0.7 L0.7 6.3" stroke="#c5c5c5" stroke-width="0.95"/>
 </svg>
 <div id="out"><div class="inner">
<div class="ol" style="top:-11.875px">*** SEMANTIC WARNING: WIDTH_MISMATCH_TRUNCATION: Returning 'm_regs.num()' of '32-bit' type for function of '1-bit' return type at line: 1,234 in file: /home/</div>
<div class="ol" style="top:0.000px">home/andreea.georgian/git/dvt.main/ro.amiq.dvt.vscode/.dvt_home/predefined_projects/libs/uvm-1.1b/src/reg/uvm_reg.svh</div>
<div class="ol" style="top:11.875px">*** SEMANTIC WARNING: WIDTH_MISMATCH_TRUNCATION: Returning 'root_hdl_paths.exists()' of '32-bit' type for function of '1-bit' return type at line: 2,123 in file: /home/</div>
<div class="ol" style="top:23.750px">andreea.georgian/git/dvt.main/ro.amiq.dvt.vscode/.dvt_home/predefined_projects/libs/uvm-1.1b/src/reg/uvm_reg_block.svh</div>
<div class="ol" style="top:35.625px">*** SEMANTIC WARNING: WIDTH_MISMATCH_TRUNCATION: Returning 'size' of '64-bit' type for function of '32-bit' return type at line: 1,095 in file: /home/andreea.georgian/</div>
<div class="ol" style="top:47.500px">git/dvt.main/ro.amiq.dvt.vscode/.dvt_home/predefined_projects/libs/uvm-1.1b/src/reg/uvm_vreg.svh</div>
<div class="ol" style="top:59.375px">*** SEMANTIC WARNING: WIDTH_MISMATCH_TRUNCATION: Returning 'top.uvm_report_enabled()' of '32-bit' type for function of '1-bit' return type at line: 119 in file: /home/</div>
<div class="ol" style="top:71.250px">andreea.georgian/git/dvt.main/ro.amiq.dvt.vscode/.dvt_home/predefined_projects/libs/uvm-1.1b/src/base/uvm_globals.svh</div>
<div class="ol" style="top:83.125px">*** Build done [total duration 11s.165ms] ***</div>
 </div></div>
 <div class="shadow"></div>
 <div class="abs" style="left:903.8px;top:22px;width:0.8px;height:109px;background:#2e2e2e"></div>
 <div class="abs" style="left:904px;top:127.5px;width:6px;height:3.5px;background:#4a4a4a"></div>
</div>

<svg class="abs" style="left:70.8px;top:105.3px" width="9" height="13" viewBox="0 0 9 13"><path d="M1 1 L1 10 L3.2 8 L4.8 11.6 L6.2 11 L4.7 7.5 L7.6 7.4 Z" fill="#e8e8e8" stroke="#1a1a1a" stroke-width="0.7" stroke-linejoin="round"/></svg>
<div class="notif"><svg class="abs" style="left:6px;top:8.2px" width="11" height="11" viewBox="0 0 11 11"><circle cx="5.5" cy="5.5" r="4.6" fill="none" stroke="#3794ff" stroke-width="0.9"/><path d="M5.5 4.6 V8" stroke="#3794ff" stroke-width="0.9"/><circle cx="5.5" cy="3.2" r="0.55" fill="#3794ff"/></svg><div class="ntext">[dvt] Build done</div></div>

<!-- STATUS BAR -->
<div id="status">
 <svg class="abs" style="left:7.5px;top:2.6px" width="9" height="9" viewBox="0 0 9 9"><circle cx="4.5" cy="4.5" r="3.9" fill="none" stroke="#fff" stroke-width="0.85"/><path d="M3 3 L6 6 M6 3 L3 6" stroke="#fff" stroke-width="0.8"/></svg>
 <div class="stxt" style="left:18.5px">0</div>
 <svg class="abs" style="left:24.5px;top:2.8px" width="9" height="9" viewBox="0 0 9 9"><path d="M4.5 0.8 L8.3 7.8 H0.7 Z" fill="none" stroke="#fff" stroke-width="0.85" stroke-linejoin="round"/><path d="M4.5 3.2 V5.6 M4.5 6.3 V7" stroke="#fff" stroke-width="0.8"/></svg>
 <svg class="abs" style="left:54.5px;top:3.5px" width="8" height="8" viewBox="0 0 8 8"><path d="M0.6 1 H7.2 M1.4 2.6 H6.4 M2.2 4.2 H5.6 M3 5.8 H4.8" stroke="#fff" stroke-width="0.8"/><path d="M3.9 6.6 V7.6" stroke="#fff" stroke-width="0.8"/></svg>
 <div class="stxt" style="left:35px">1K</div>
 <div class="stxt" style="left:64px">On</div>
 <svg class="abs" style="left:1046.5px;top:2.6px" width="9" height="9" viewBox="0 0 9 9"><circle cx="4.5" cy="4.5" r="3.2" fill="none" stroke="#fff" stroke-width="1.3" stroke-dasharray="1.2 0.8"/><circle cx="4.5" cy="4.5" r="1.3" fill="none" stroke="#fff" stroke-width="0.8"/></svg>
 <div class="stxt" style="left:1057.5px;font-size:7.65px;top:2.5px">uvm_ref_flow_1.1</div>
 <svg class="abs" style="left:1119.6px;top:3.6px" width="8" height="7" viewBox="0 0 8 7"><path d="M0.6 3.5 H7 M4.2 0.8 L7 3.5 L4.2 6.2" fill="none" stroke="#fff" stroke-width="0.85"/></svg>
 <div class="stxt" style="left:1130.8px">default</div>
 <svg class="abs" style="left:1165.5px;top:2.2px" width="10" height="10" viewBox="0 0 10 10"><path d="M2.8 5 V3.4 C2.8 2 3.8 1 5 1 C6.2 1 7.2 2 7.2 3.4 V5" fill="none" stroke="#fff" stroke-width="0.9"/><rect x="1.4" y="5" width="7.2" height="4.2" rx="1.4" fill="none" stroke="#fff" stroke-width="0.9"/></svg>
 <svg class="abs" style="left:1184.5px;top:2.3px" width="10" height="10" viewBox="0 0 10 10"><path d="M1.5 8 H7.5 M2.5 8 V4.8 C2.5 3 3.6 1.6 5 1.5" fill="none" stroke="#fff" stroke-width="0.9"/><circle cx="6.9" cy="3" r="1.8" fill="#fff"/><path d="M4 9.2 H5.6" stroke="#fff" stroke-width="0.9"/></svg>
</div>
</body></html>
